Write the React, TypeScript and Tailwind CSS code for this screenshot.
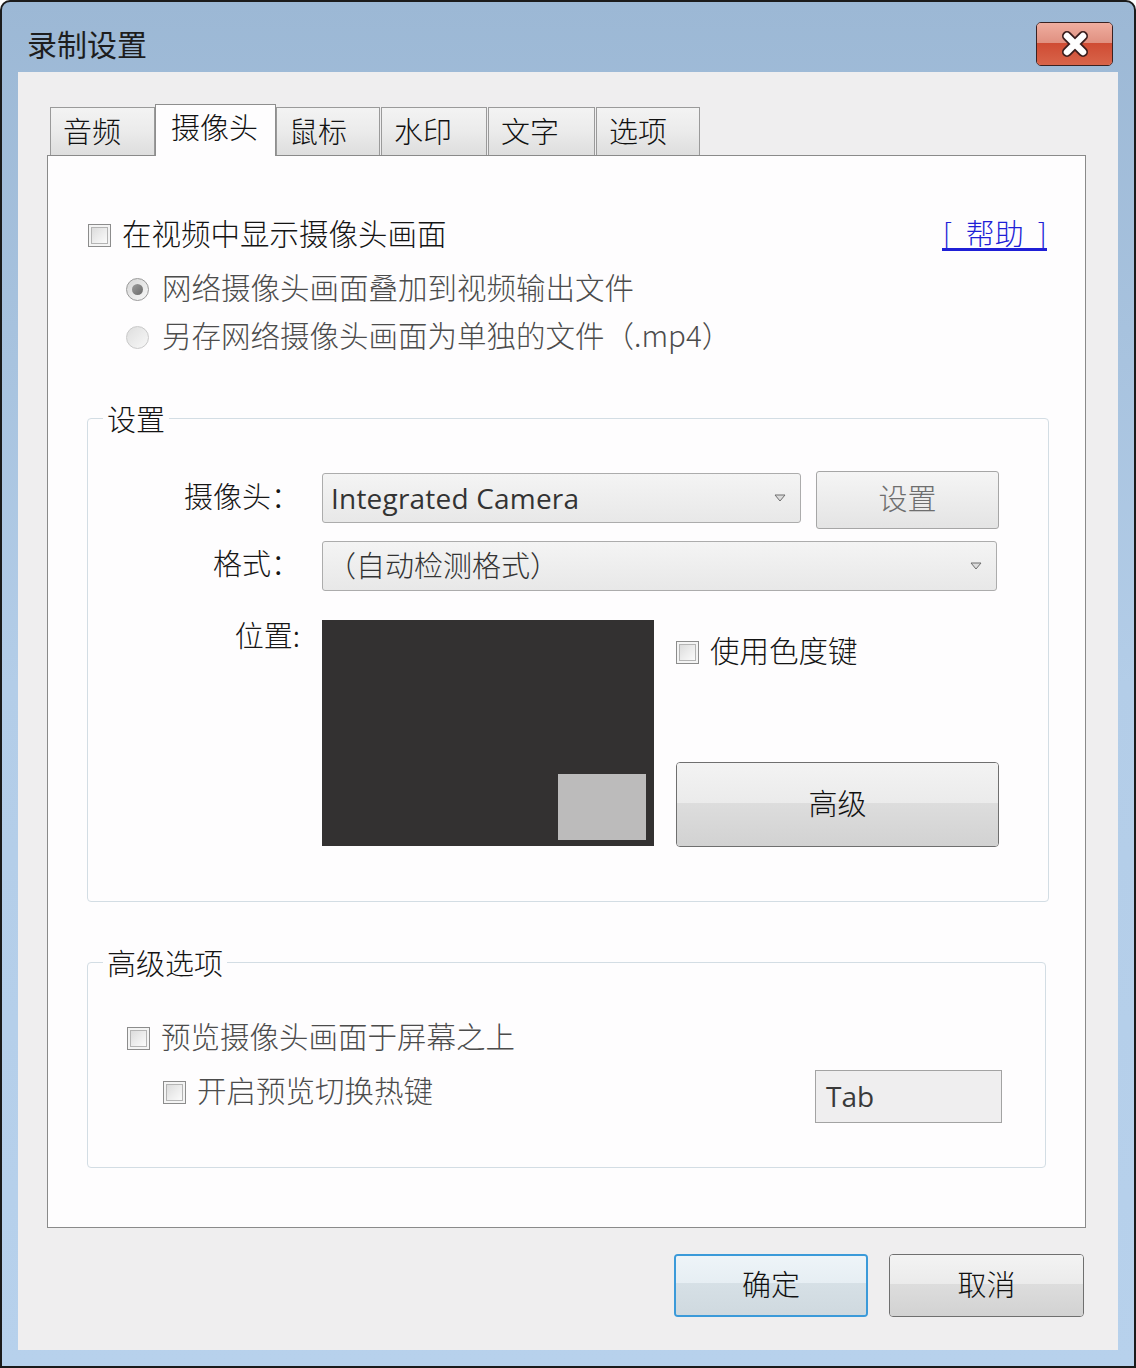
import React from "react";

const TABS = [
  { label: "音频", cls: "ml-[3px] w-[105px]", active: false },
  { label: "摄像头", cls: "w-[121px]", active: true },
  { label: "鼠标", cls: "w-[104px]", active: false },
  { label: "水印", cls: "ml-[1px] w-[106px]", active: false },
  { label: "文字", cls: "ml-[1px] w-[107px]", active: false },
  { label: "选项", cls: "ml-[1px] w-[104px]", active: false },
];

function CheckBox() {
  return (
    <span className="flex size-[23px] shrink-0 items-center justify-center border border-[#8c8c8c] bg-[#f4f4f4]">
      <span className="size-[17px] border border-[#b4b4b4] bg-gradient-to-br from-[#dcdcdc] via-[#ececec] to-[#fbfbfb]" />
    </span>
  );
}

function Radio({ checked, disabled }: { checked?: boolean; disabled?: boolean }) {
  return (
    <span
      className={
        disabled
          ? "flex size-[23px] shrink-0 items-center justify-center rounded-full border border-[#c9c9c9] bg-gradient-to-br from-[#dedede] to-[#f8f8f8]"
          : "flex size-[23px] shrink-0 items-center justify-center rounded-full border border-[#9a9a9a] bg-gradient-to-br from-[#d6d6d6] to-[#f8f8f8]"
      }
    >
      {checked && (
        <span className="size-[11px] rounded-full bg-gradient-to-br from-[#9c9c9c] to-[#6a6a6a]" />
      )}
    </span>
  );
}

function Arrow() {
  return (
    <svg width="12" height="8" viewBox="0 0 12 8" className="shrink-0">
      <path d="M1 1 L11 1 L6 7 Z" fill="#dcdcdc" stroke="#6e6e6e" strokeWidth="1" />
    </svg>
  );
}

export default function App() {
  return (
    <div className="h-[1368px] w-[1136px] overflow-hidden rounded-t-[10px] border-2 border-[#1b1b1b] bg-gradient-to-b from-[#9cb8d5] via-[#b3cde8] to-[#b7d1ec] font-['Noto_Sans_CJK_SC',sans-serif] font-light text-[#161616]">
      {/* Title bar */}
      <div className="flex h-[70px] items-start justify-between pl-[25px] pr-[21px]">
        <div className="mt-[21px] text-[30px] font-normal leading-[40px] text-[#1d1d1d]">录制设置</div>
        <div className="mt-[20px] flex h-[44px] w-[77px] flex-col overflow-hidden rounded-[5px] border border-[#3a2222] shadow-[inset_0_0_0_1px_#eaa595]">
          <div className="relative flex flex-1 flex-col">
            <div className="h-[20px] bg-gradient-to-b from-[#efaea0] to-[#e09080]" />
            <div className="flex-1 bg-gradient-to-b from-[#cf4b33] to-[#d8644a]" />
            <svg
              width="32"
              height="28"
              viewBox="0 0 32 28"
              className="absolute left-[22px] top-[7px]"
            >
              <path d="M8 6 L24 22 M24 6 L8 22" stroke="#3a1d1d" strokeWidth="10" strokeLinecap="round" />
              <path d="M8 6 L24 22 M24 6 L8 22" stroke="#ffffff" strokeWidth="6.5" strokeLinecap="round" />
            </svg>
          </div>
        </div>
      </div>

      {/* Client area */}
      <div className="mx-[16px] flex h-[1278px] flex-col bg-[#efeeef] pl-[29px] pt-[31px]">
        {/* Tabs */}
        <div className="relative z-10 flex h-[52px] items-end">
          {TABS.map((t) =>
            t.active ? (
              <div
                key={t.label}
                className={`${t.cls} -mb-px h-[52px] border border-b-0 border-[#8e8e8e] bg-[#fefdfe] pl-[15px] pt-[1px] text-[29px] leading-[40px] text-[#111]`}
              >
                {t.label}
              </div>
            ) : (
              <div
                key={t.label}
                className={`${t.cls} h-[48px] border border-b-0 border-[#9a9a9a] bg-gradient-to-b from-[#f3f3f3] via-[#ebebeb] to-[#dedede] pl-[12px] pt-[1px] text-[29px] leading-[42px] text-[#111]`}
              >
                {t.label}
              </div>
            ),
          )}
        </div>

        {/* Panel */}
        <div className="flex h-[1073px] w-[1039px] flex-col border border-[#8a8a8a] bg-[#fefdfe] px-[39px] pt-[64px]">
          <div className="flex h-[30px] items-center justify-between">
            <div className="flex items-center gap-[11px] pl-[1px]">
              <CheckBox />
              <span className="mb-[6px] text-[29.5px] leading-[30px] text-[#141414]">在视频中显示摄像头画面</span>
            </div>
            <span className="-mr-[1px] mb-[2px] flex items-end gap-[14px] border-b-[3px] border-[#1f1fd6] pb-[1px] pl-[1px] text-[29px] leading-[30px] text-[#1f1fd6]">
              <span>[</span>
              <span>帮助</span>
              <span>]</span>
            </span>
          </div>

          <div className="mt-[24px] flex h-[30px] items-center gap-[13px] pl-[39px]">
            <Radio checked />
            <span className="mb-[6px] text-[29.5px] leading-[30px] text-[#4c4c4c]">网络摄像头画面叠加到视频输出文件</span>
          </div>
          <div className="mt-[18px] flex h-[30px] items-center gap-[13px] pl-[39px]">
            <Radio disabled />
            <span className="mb-[6px] text-[29.5px] leading-[30px] text-[#4c4c4c]">另存网络摄像头画面为单独的文件（.mp4）</span>
          </div>

          {/* Settings group */}
          <fieldset className="-mr-[3px] mt-[51px] rounded-[4px] border border-[#d3dde4] pb-[54px]">
            <legend className="ml-[15px] px-[4px] text-[29px] leading-[30px] text-[#141414]">设置</legend>
            <div className="flex flex-col pt-[38px]">
              <div className="flex items-start">
                <div className="mt-[-1px] w-[212px] text-right text-[29px] leading-[50px]">摄像头：</div>
                <div className="ml-[22px] mt-[2px] flex h-[50px] w-[479px] items-center justify-between rounded-[3px] border border-[#acacac] bg-gradient-to-b from-[#f4f4f4] to-[#e8e8e8] pl-[8px] pr-[14px]">
                  <span className="font-['Open_Sans',sans-serif] text-[28px] font-normal leading-[40px] tracking-[0.2px] text-[#333]">Integrated Camera</span>
                  <Arrow />
                </div>
                <div className="ml-[15px] flex h-[58px] w-[183px] items-center justify-center rounded-[3px] border border-[#a6a6a6] bg-gradient-to-b from-[#f5f5f5] to-[#e4e4e4] pb-[4px] text-[29px] text-[#6e6e6e]">
                  设置
                </div>
              </div>

              <div className="mt-[12px] flex items-start">
                <div className="mt-[-4px] w-[212px] text-right text-[29px] leading-[50px]">格式：</div>
                <div className="ml-[22px] flex h-[50px] w-[675px] items-center justify-between rounded-[3px] border border-[#acacac] bg-gradient-to-b from-[#f4f4f4] to-[#e8e8e8] pl-[4px] pr-[14px]">
                  <span className="mb-[4px] text-[29px] leading-[40px] text-[#333]">（自动检测格式）</span>
                  <Arrow />
                </div>
              </div>

              <div className="mt-[29px] flex items-start">
                <div className="-mt-[6px] w-[212px] text-right text-[29px] leading-[40px]">位置:</div>
                <div className="ml-[22px] flex h-[226px] w-[332px] items-end justify-end bg-[#333131] pb-[6px] pr-[8px]">
                  <div className="h-[66px] w-[88px] bg-[#bcbbbb]" />
                </div>
                <div className="ml-[22px] flex w-[323px] flex-col">
                  <div className="mt-[17px] flex h-[30px] items-center gap-[11px]">
                    <CheckBox />
                    <span className="mb-[6px] text-[29.5px] leading-[30px] text-[#141414]">使用色度键</span>
                  </div>
                  <div className="mt-[95px] flex h-[85px] flex-col overflow-hidden rounded-[4px] border border-[#6f6f6f]">
                    <div className="relative flex flex-1 flex-col">
                      <div className="h-[40px] bg-gradient-to-b from-[#f3f3f3] to-[#ebebeb]" />
                      <div className="flex-1 bg-gradient-to-b from-[#dddddd] to-[#d2d2d2]" />
                      <div className="absolute inset-0 flex items-center justify-center pb-[4px] text-[29px] text-[#111]">高级</div>
                    </div>
                  </div>
                </div>
              </div>
            </div>
          </fieldset>

          {/* Advanced options group */}
          <fieldset className="mt-[45px] rounded-[4px] border border-[#d3dde4] pb-[44px] pl-[39px] pr-[43px]">
            <legend className="ml-[-24px] px-[4px] text-[29px] leading-[30px] text-[#141414]">高级选项</legend>
            <div className="flex flex-col pt-[46px]">
              <div className="flex h-[30px] items-center gap-[11px]">
                <CheckBox />
                <span className="mb-[6px] text-[29.5px] leading-[30px] text-[#4c4c4c]">预览摄像头画面于屏幕之上</span>
              </div>
              <div className="mt-[17px] flex items-start justify-between">
                <div className="ml-[36px] mt-[7px] flex h-[30px] items-center gap-[11px]">
                  <CheckBox />
                  <span className="mb-[6px] text-[29.5px] leading-[30px] text-[#4c4c4c]">开启预览切换热键</span>
                </div>
                <div className="flex h-[53px] w-[187px] items-center border border-[#a3a3a3] bg-[#efeeef] pb-[2px] pl-[10px] font-['Open_Sans',sans-serif] text-[28px] font-normal text-[#3a3a3a]">
                  Tab
                </div>
              </div>
            </div>
          </fieldset>
        </div>

        {/* Dialog buttons */}
        <div className="mt-[26px] flex w-[1039px] justify-end gap-[21px] pr-[2px]">
          <div className="flex h-[63px] w-[194px] flex-col overflow-hidden rounded-[4px] border-2 border-[#3b9ad9] shadow-[inset_0_0_0_1px_#b6e0f7]">
            <div className="relative flex flex-1 flex-col">
              <div className="h-[27px] bg-gradient-to-b from-[#eef4f8] to-[#e6eef3]" />
              <div className="flex-1 bg-gradient-to-b from-[#d6e0e6] to-[#cfd9df]" />
              <div className="absolute inset-0 flex items-center justify-center pb-[4px] text-[29px] text-[#111]">确定</div>
            </div>
          </div>
          <div className="flex h-[63px] w-[195px] flex-col overflow-hidden rounded-[4px] border border-[#6f6f6f]">
            <div className="relative flex flex-1 flex-col">
              <div className="h-[29px] bg-gradient-to-b from-[#f3f3f3] to-[#ebebeb]" />
              <div className="flex-1 bg-gradient-to-b from-[#dddddd] to-[#d2d2d2]" />
              <div className="absolute inset-0 flex items-center justify-center pb-[4px] text-[29px] text-[#111]">取消</div>
            </div>
          </div>
        </div>
      </div>
    </div>
  );
}
